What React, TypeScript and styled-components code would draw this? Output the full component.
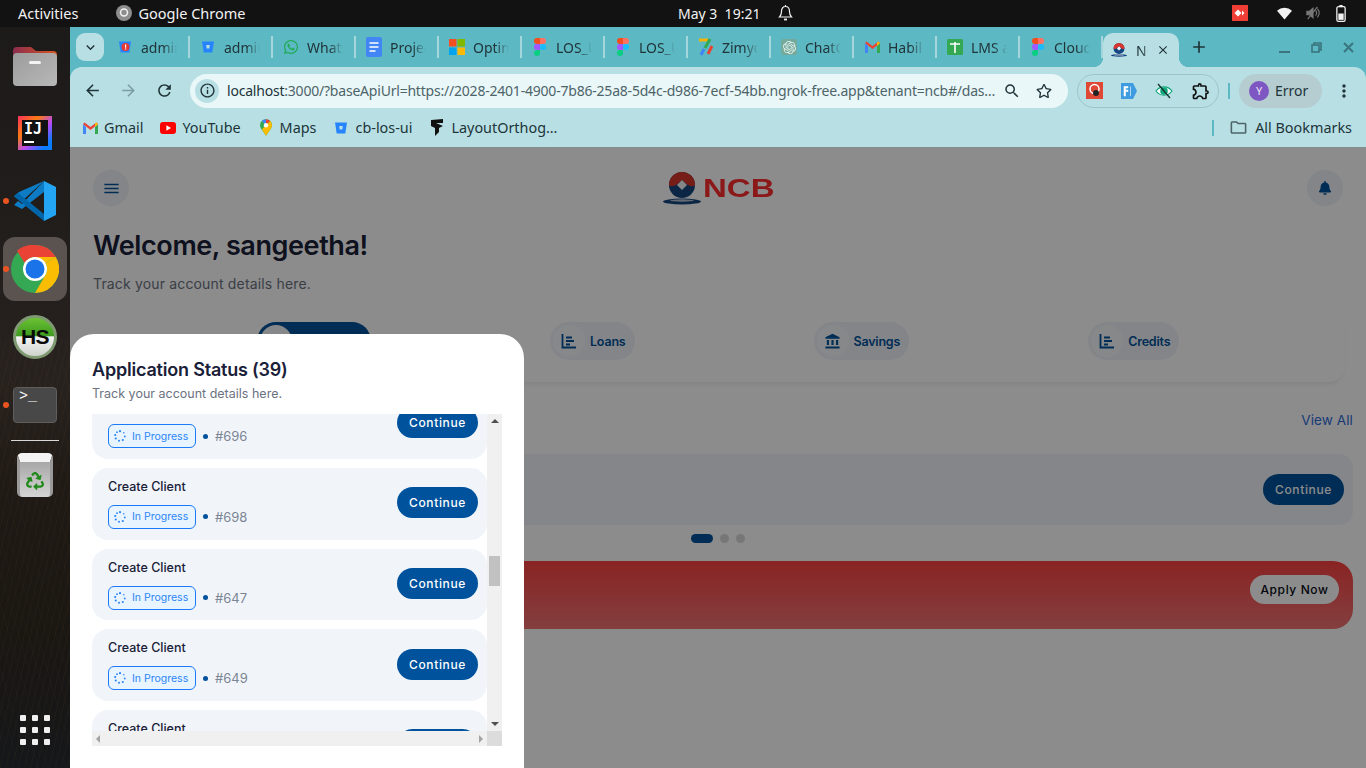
import React from "react";
import styled, { createGlobalStyle } from "styled-components";
import { FaWhatsapp, FaBell, FaRegStar, FaRecycle } from "react-icons/fa";
import { SiOpenai } from "react-icons/si";
import {
  MdArrowBack,
  MdArrowForward,
  MdRefresh,
  MdMenu,
  MdAccountBalance,
  MdOutlineFolder,
  MdMoreVert,
  MdClose,
  MdAdd,
  MdKeyboardArrowDown,
  MdOutlineInfo,
  MdSearch,
  MdOutlineExtension,
} from "react-icons/md";

const uiFont = `"Noto Sans", "Open Sans", sans-serif`;
const pageFont = `Inter, "Noto Sans", sans-serif`;

const GlobalStyle = createGlobalStyle`
  html, body {
    margin: 0;
    padding: 0;
    overflow: hidden;
    background: #111;
  }
  * {
    box-sizing: border-box;
  }
`;

const Desktop = styled.div`
  width: 1366px;
  height: 768px;
  display: flex;
  flex-direction: column;
  overflow: hidden;
  font-family: ${uiFont};
`;

/* ---------- gnome top bar ---------- */

const TopBar = styled.div`
  height: 27px;
  flex: none;
  display: flex;
  align-items: center;
  padding-bottom: 1px;
  background: #121212;
  color: #f2f2f2;
  font-size: 14.5px;
`;

const TopLeft = styled.div`
  width: 678px;
  padding-left: 18px;
  display: flex;
  align-items: center;
`;

const AppMenu = styled.div`
  margin-left: 38px;
  display: flex;
  align-items: center;
  gap: 6px;
`;

const TopCenter = styled.div`
  display: flex;
  align-items: center;
  gap: 18px;
  font-size: 14px;
`;

const TopRight = styled.div`
  margin-left: auto;
  display: flex;
  align-items: center;
  padding-right: 20px;
`;

const TrayIcon = styled.svg<{ $gap: number }>`
  display: block;
  margin-left: ${(p) => p.$gap}px;
`;

/* ---------- dock ---------- */

const Body = styled.div`
  flex: 1;
  display: flex;
  min-height: 0;
`;

const Dock = styled.div`
  width: 70px;
  flex: none;
  display: flex;
  flex-direction: column;
  align-items: center;
  padding: 4px 0 23px;
  background:
    repeating-linear-gradient(103deg, rgba(130, 90, 45, 0.07) 0 1px, transparent 1px 6px) bottom / 100% 58% no-repeat,
    repeating-linear-gradient(74deg, rgba(110, 75, 40, 0.05) 0 1px, transparent 1px 9px) bottom / 100% 58% no-repeat,
    linear-gradient(180deg, #1d1b1a 0%, #201d1b 25%, #28221f 48%, #1f1a15 62%, #1b1712 80%, #15171a 100%);
`;

const DockSlot = styled.div<{ $active?: boolean }>`
  position: relative;
  width: 64px;
  height: 68px;
  display: flex;
  align-items: center;
  justify-content: center;

  &::before {
    content: "";
    position: absolute;
    inset: 2px 0;
    border-radius: 12px;
    background: ${(p) => (p.$active ? "#5a5350" : "transparent")};
  }

  & > * {
    position: relative;
  }
`;

const RunningDot = styled.span`
  position: absolute !important;
  left: 0;
  top: 31px;
  width: 6px;
  height: 6px;
  border-radius: 50%;
  background: #e95420;
`;

const DockSeparator = styled.div`
  width: 48px;
  height: 1px;
  background: #d8d8d8;
  margin-top: 1px;
`;

const IdeTile = styled.div`
  width: 34px;
  height: 34px;
  padding: 4px;
  background: linear-gradient(135deg, #fe315d 0%, #f97a12 32%, #b74af7 58%, #087cfa 85%);
`;

const IdeInner = styled.div`
  width: 100%;
  height: 100%;
  background: #111;
  color: #fff;
  display: flex;
  flex-direction: column;
  padding: 2px 0 0 2px;
  font-family: "DejaVu Sans Mono", monospace;
  font-weight: 700;
  font-size: 15px;
  line-height: 14px;

  &::after {
    content: "";
    width: 10px;
    height: 2px;
    margin-top: 5px;
    background: #fff;
  }
`;

const HsBall = styled.div`
  width: 44px;
  height: 44px;
  border-radius: 50%;
  border: 3px solid #7f9a72;
  background: linear-gradient(180deg, #6cc234 0%, #3d9a1e 48%, #f4f4f4 49%, #cfd4cc 100%);
  display: flex;
  align-items: center;
  justify-content: center;
  color: #0a0a0a;
  font-family: "Liberation Sans", sans-serif;
  font-weight: 700;
  font-size: 21px;
  letter-spacing: -0.5px;
`;

const TerminalTile = styled.div`
  width: 44px;
  height: 36px;
  border-radius: 4px;
  border: 1px solid #5e5e5e;
  background: #484848;
  color: #fff;
  font-family: "Liberation Mono", monospace;
  font-size: 15px;
  line-height: 14px;
  padding: 2px 0 0 5px;
`;

const TrashTile = styled.div`
  width: 36px;
  height: 44px;
  padding-top: 10px;
  border-radius: 5px;
  border-top: 9px solid #f4f4f4;
  border-left: 3px solid #9a9a9a;
  border-right: 3px solid #9a9a9a;
  background: linear-gradient(180deg, #a8a8a8 0%, #d4d4d4 100%);
  color: #1f8a1a;
  display: flex;
  justify-content: center;
  font-size: 18px;
  line-height: 0;
`;

const AppGrid = styled.div`
  margin-top: auto;
  display: grid;
  grid-template-columns: repeat(3, 6px);
  gap: 6px;
`;

const AppGridDot = styled.span`
  width: 6px;
  height: 6px;
  border-radius: 1px;
  background: #f0f0f0;
`;

/* ---------- browser chrome ---------- */

const Browser = styled.div`
  flex: 1;
  min-width: 0;
  display: flex;
  flex-direction: column;
  background: #5cb8c2;
`;

const TabStrip = styled.div`
  height: 40px;
  flex: none;
  display: flex;
  align-items: center;
  padding-left: 6px;
  color: #20343a;
  font-size: 14px;
`;

const TabSearch = styled.div`
  width: 28px;
  height: 28px;
  margin-right: 3px;
  border-radius: 9px;
  background: #b8e0e4;
  display: flex;
  align-items: center;
  justify-content: center;
  font-size: 17px;
`;

const Tab = styled.div`
  width: 83px;
  height: 22px;
  display: flex;
  align-items: center;
  padding-left: 10px;
  border-right: 2px solid #a5d6db;
`;

const FavSlot = styled.span`
  width: 16px;
  flex: none;
  display: flex;
  align-items: center;
  justify-content: center;
`;

const TabTitle = styled.span`
  width: 36px;
  margin-left: 8px;
  overflow: hidden;
  white-space: nowrap;
  font-size: 14px;
  -webkit-mask-image: linear-gradient(90deg, #000 62%, transparent 100%);
  mask-image: linear-gradient(90deg, #000 62%, transparent 100%);
`;

const ActiveTab = styled.div`
  position: relative;
  width: 76px;
  height: 34px;
  margin-top: 6px;
  padding: 0 9px 0 8px;
  display: flex;
  align-items: center;
  background: #b8e0e4;
  border-radius: 10px 10px 0 0;

  &::before,
  &::after {
    content: "";
    position: absolute;
    bottom: 0;
    width: 10px;
    height: 10px;
    background: radial-gradient(circle at 0 0, transparent 10px, #b8e0e4 10.5px);
  }
  &::before {
    left: -10px;
  }
  &::after {
    right: -10px;
    background: radial-gradient(circle at 100% 0, transparent 10px, #b8e0e4 10.5px);
  }
`;

const ActiveTitle = styled(TabTitle)`
  width: 12px;
  margin-left: 9px;
  flex: none;
`;

const TabClose = styled(MdClose)`
  margin-left: auto;
  font-size: 14px;
  color: #20343a;
`;

const NewTab = styled(MdAdd)`
  margin-left: 10px;
  font-size: 20px;
`;

const WindowControls = styled.div`
  margin-left: auto;
  padding-right: 12px;
  display: flex;
  align-items: center;
  gap: 21px;
  color: #3a757f;
`;

const Toolbar = styled.div`
  height: 44px;
  flex: none;
  display: flex;
  align-items: center;
  padding: 3px 0 0 12px;
  background: #b8e0e4;
  border-radius: 12px 12px 0 0;
  color: #20343a;
`;

const NavButton = styled.div<{ $dim?: boolean }>`
  width: 20px;
  height: 20px;
  margin-right: 16px;
  display: flex;
  align-items: center;
  justify-content: center;
  font-size: 19px;
  color: ${(p) => (p.$dim ? "#7c9da3" : "#20343a")};
`;

const Omnibox = styled.div`
  width: 878px;
  height: 34px;
  padding: 0 14px 0 5px;
  border-radius: 17px;
  background: #eaf7f8;
  display: flex;
  align-items: center;
  font-size: 14px;
  color: #4d6469;
`;

const InfoChip = styled.div`
  width: 24px;
  height: 24px;
  flex: none;
  margin-right: 8px;
  border-radius: 50%;
  background: #b8e0e4;
  color: #20343a;
  display: flex;
  align-items: center;
  justify-content: center;
  font-size: 17px;
`;

const UrlText = styled.div`
  flex: 1;
  min-width: 0;
  overflow: hidden;
  white-space: nowrap;
  letter-spacing: -0.21px;
  b {
    font-weight: 400;
    color: #20343a;
  }
`;

const OmniAction = styled.div<{ $gap: number; $size: number }>`
  margin-left: ${(p) => p.$gap}px;
  width: 20px;
  display: flex;
  justify-content: center;
  font-size: ${(p) => p.$size}px;
  color: #20343a;
`;

const ExtensionGroup = styled.div`
  width: 142px;
  height: 34px;
  margin-left: 9px;
  padding: 0 7px 0 8px;
  border: 1px solid #9cc5ca;
  border-radius: 17px;
  display: flex;
  align-items: center;
  justify-content: space-between;
  color: #111;
`;

const ToolDivider = styled.div`
  width: 2px;
  height: 16px;
  margin-left: 9px;
  background: #5cb8c2;
`;

const ProfileChip = styled.div`
  width: 83px;
  height: 34px;
  margin-left: 9px;
  padding-left: 10px;
  border-radius: 17px;
  background: #b5cdd1;
  display: flex;
  align-items: center;
  gap: 6px;
  font-size: 14px;
  color: #20343a;
`;

const Avatar = styled.div`
  width: 20px;
  height: 20px;
  border-radius: 50%;
  background: #7e57c2;
  color: #e9e2f7;
  font-size: 11px;
  display: flex;
  align-items: center;
  justify-content: center;
`;

const MoreButton = styled(MdMoreVert)`
  margin-left: 12px;
  font-size: 20px;
`;

const BookmarksBar = styled.div`
  height: 37px;
  flex: none;
  display: flex;
  align-items: center;
  background: #b8e0e4;
  border-bottom: 1px solid #858d8e;
  padding: 0 14px 3px 12px;
  color: #20343a;
  font-size: 14.4px;
`;

const Bookmark = styled.div`
  display: flex;
  align-items: center;
  gap: 6px;
  margin-right: 17px;
  white-space: nowrap;
`;

const BookmarksEnd = styled.div`
  margin-left: auto;
  display: flex;
  align-items: center;
  gap: 7px;
`;

const BarDivider = styled.div`
  width: 2px;
  height: 16px;
  margin-right: 8px;
  background: #5cb8c2;
`;

/* ---------- page under the sheet ---------- */

const Viewport = styled.div`
  position: relative;
  flex: 1;
  min-height: 0;
  overflow: hidden;
  background: #fff;
  font-family: ${pageFont};
`;

const Page = styled.div`
  padding: 22px 13px 0 23px;
`;

const PageHeader = styled.div`
  margin-right: 10px;
  display: flex;
  align-items: center;
  justify-content: space-between;
`;

const CircleButton = styled.div`
  width: 36px;
  height: 36px;
  border-radius: 50%;
  background: #f0f3f7;
  color: #00529c;
  display: flex;
  align-items: center;
  justify-content: center;
  font-size: 19px;
`;

const Logo = styled.div`
  width: 110px;
  display: flex;
  align-items: center;
  gap: 2px;
`;

const LogoText = styled.span`
  font-family: "Liberation Sans", sans-serif;
  font-weight: 700;
  font-size: 25px;
  line-height: 26px;
  color: #fd2e2e;
  transform: scaleX(1.32);
  transform-origin: left;
`;

const Heading = styled.h1`
  margin: 23px 0 0;
  font-size: 27px;
  line-height: 34px;
  font-weight: 600;
  letter-spacing: -0.4px;
  color: #1a2038;
`;

const Subheading = styled.p`
  margin: 11px 0 0;
  font-size: 14px;
  line-height: 20px;
  letter-spacing: 0.16px;
  color: #6b7280;
`;

const TabsCard = styled.div`
  margin: 12px 8px 0 -15px;
  padding: 16px 0 22px 179px;
  display: flex;
  gap: 179px;
  border-radius: 16px;
  box-shadow: 0 4px 4px -2px rgba(0, 0, 0, 0.08);
`;

const Pill = styled.div<{ $active?: boolean }>`
  height: 38px;
  min-width: ${(p) => (p.$active ? "114px" : "0")};
  padding: 3px 9px 3px 3px;
  border-radius: 19px;
  background: ${(p) => (p.$active ? "#00529c" : "#f0f3f7")};
  display: flex;
  align-items: center;
  gap: 5px;
  font-size: 12.5px;
  font-weight: 600;
  letter-spacing: -0.2px;
  color: #00529c;
`;

const PillIcon = styled.div`
  width: 32px;
  height: 32px;
  border-radius: 50%;
  background: #f6f8fb;
  display: flex;
  align-items: center;
  justify-content: center;
  font-size: 17px;
`;

const SectionHeader = styled.div`
  margin-top: 28px;
  display: flex;
  justify-content: flex-end;
  font-size: 13.5px;
  line-height: 20px;
  letter-spacing: 0.1px;
  color: #2d6bd8;
`;

const AppCard = styled.div`
  height: 71px;
  margin-top: 24px;
  padding-right: 9px;
  border-radius: 14px;
  background: #f1f5fa;
  display: flex;
  align-items: center;
  justify-content: flex-end;
`;

const ContinueButton = styled.div`
  width: 81px;
  height: 31px;
  flex: none;
  border-radius: 16px;
  background: #00529c;
  color: #fff;
  display: flex;
  align-items: center;
  justify-content: center;
  font-size: 12px;
  font-weight: 550;
  letter-spacing: 0.65px;
`;

const RowButton = styled(ContinueButton)`
  margin-bottom: 2px;
`;

const Pager = styled.div`
  margin: 9px 0 0 598px;
  display: flex;
  gap: 7px;
`;

const PagerDot = styled.span<{ $on?: boolean }>`
  width: ${(p) => (p.$on ? 22 : 9)}px;
  height: 9px;
  border-radius: 5px;
  background: ${(p) => (p.$on ? "#00529c" : "#d9d9d9")};
`;

const Banner = styled.div`
  height: 68px;
  margin-top: 18px;
  padding: 14px 14px 0 0;
  border-radius: 20px;
  background: linear-gradient(180deg, #fb4141 0%, #f07373 100%);
  display: flex;
  justify-content: flex-end;
`;

const ApplyButton = styled.div`
  width: 89px;
  height: 29px;
  border-radius: 15px;
  background: #fff;
  color: #050a14;
  display: flex;
  align-items: center;
  justify-content: center;
  font-size: 12px;
  font-weight: 500;
  letter-spacing: 0.6px;
`;

const Scrim = styled.div`
  position: absolute;
  inset: 0;
  background: rgba(0, 0, 0, 0.45);
`;

/* ---------- bottom sheet ---------- */

const Sheet = styled.div`
  position: absolute;
  left: 0;
  bottom: 0;
  width: 454px;
  height: 434px;
  padding: 25px 22px 22px;
  display: flex;
  flex-direction: column;
  background: #fff;
  border-radius: 24px 24px 0 0;
`;

const SheetTitle = styled.div`
  font-size: 18px;
  line-height: 22px;
  font-weight: 600;
  letter-spacing: -0.2px;
  color: #1a2038;
`;

const SheetSub = styled.div`
  margin-top: 5px;
  font-size: 12.5px;
  line-height: 16px;
  color: #6b7280;
`;

const ListFrame = styled.div`
  margin-top: 12px;
  flex: 1;
  min-height: 0;
  display: grid;
  grid-template-columns: 395px 15px;
  grid-template-rows: 1fr 15px;
`;

const ListClip = styled.div`
  overflow: hidden;
  min-height: 0;
`;

const List = styled.div`
  margin-top: -26.6px;
  display: flex;
  flex-direction: column;
  gap: 9px;
`;

const Row = styled.div`
  height: 71.67px;
  flex: none;
  padding: 0 9px 0 16px;
  border-radius: 16px;
  background: #f1f5fa;
  display: flex;
  align-items: center;
  justify-content: space-between;
`;

const RowText = styled.div`
  display: flex;
  flex-direction: column;
  gap: 10px;
`;

const RowTitle = styled.div`
  font-size: 12.5px;
  line-height: 16px;
  font-weight: 500;
  color: #1a2038;
`;

const RowMeta = styled.div`
  display: flex;
  align-items: center;
  gap: 7px;
  font-size: 13px;
  color: #7b8594;
`;

const StatusBadge = styled.div`
  width: 88px;
  height: 24px;
  border: 1px solid #1a7af8;
  border-radius: 6px;
  background: #e8f4ff;
  color: #2d86f6;
  font-size: 10.5px;
  display: flex;
  align-items: center;
  gap: 6px;
  padding-left: 5px;
  white-space: nowrap;
`;

const MetaBullet = styled.span`
  width: 5px;
  height: 5px;
  border-radius: 50%;
  background: #00529c;
`;

const ScrollTrack = styled.div`
  background: #f0f0f0;
  display: flex;
  flex-direction: column;
  align-items: center;
  justify-content: space-between;
  padding: 5px 0;
  min-height: 0;
`;

const ScrollThumb = styled.div`
  width: 11px;
  height: 30px;
  margin-top: 133px;
  margin-bottom: auto;
  background: #c1c1c1;
`;

const ScrollArrow = styled.span<{ $dir: "up" | "down" | "left" | "right" }>`
  width: 0;
  height: 0;
  flex: none;
  border-style: solid;
  border-color: transparent;
  ${(p) =>
    p.$dir === "up"
      ? "border-width: 0 4px 4px; border-bottom-color: #505050;"
      : p.$dir === "down"
        ? "border-width: 4px 4px 0; border-top-color: #505050;"
        : p.$dir === "left"
          ? "border-width: 4px 4px 4px 0; border-right-color: #a3a3a3;"
          : "border-width: 4px 0 4px 4px; border-left-color: #a3a3a3;"}
`;

const ScrollTrackH = styled.div`
  background: #f0f0f0;
  display: flex;
  align-items: center;
  justify-content: space-between;
  padding: 0 4px;
`;

const ScrollCorner = styled.div`
  background: #dcdcdc;
`;

const ChatGptTile = styled.span`
  width: 16px;
  height: 16px;
  border-radius: 2px;
  background: #74aa9c;
  color: #e8f3f0;
  font-size: 13px;
  display: flex;
  align-items: center;
  justify-content: center;
`;

/* ---------- drawings ---------- */

const BitbucketIcon = ({ alert = false }: { alert?: boolean }) => (
  <svg width="14" height="14" viewBox="0 0 14 14">
    <path d="M1 1.5h12l-1.700 11H2.700z" fill="#2684ff" />
    {alert ? (
      <>
        <circle cx="7.500" cy="7" r="4" fill="#e53935" />
        <rect x="7" y="4.500" width="1.200" height="3.200" fill="#fff" />
        <rect x="7" y="8.400" width="1.200" height="1.200" fill="#fff" />
      </>
    ) : (
      <path d="M5.200 5h3.600l-.5 3.400H5.700z" fill="#b8e0e4" />
    )}
  </svg>
);

const FigmaIcon = () => (
  <svg width="12" height="18" viewBox="0 0 12 18">
    <path d="M6 0H3a3 3 0 0 0 0 6h3z" fill="#f24e1e" />
    <path d="M6 0h3a3 3 0 0 1 0 6H6z" fill="#ff7262" />
    <path d="M6 6H3a3 3 0 0 0 0 6h3z" fill="#a259ff" />
    <circle cx="9" cy="9" r="3" fill="#1abcfe" />
    <path d="M3 12h3v3a3 3 0 1 1-3-3z" fill="#0acf83" />
  </svg>
);

const DocsIcon = () => (
  <svg width="16" height="20" viewBox="0 0 16 20">
    <rect width="16" height="20" rx="2" fill="#4285f4" />
    <path d="M3.500 6h9M3.500 10h9M3.500 14h6" stroke="#fff" strokeWidth="1.600" />
  </svg>
);

const MicrosoftIcon = () => (
  <svg width="16" height="16" viewBox="0 0 16 16">
    <rect width="7.500" height="7.500" fill="#f25022" />
    <rect x="8.500" width="7.500" height="7.500" fill="#7fba00" />
    <rect y="8.500" width="7.500" height="7.500" fill="#00a4ef" />
    <rect x="8.500" y="8.500" width="7.500" height="7.500" fill="#ffb900" />
  </svg>
);

const ZimyoIcon = () => (
  <svg width="16" height="18" viewBox="0 0 16 18">
    <path d="M1 2h9" stroke="#f4b400" strokeWidth="3" />
    <path d="M12 1 7 10" stroke="#34a853" strokeWidth="3" />
    <path d="M6 11 3 17" stroke="#4285f4" strokeWidth="3" />
    <path d="M14 8l-4 8" stroke="#ea4335" strokeWidth="3" />
  </svg>
);

const GmailIcon = () => (
  <svg width="15" height="12" viewBox="0 0 15 12">
    <path d="M0 2v10h3V5z" fill="#4285f4" />
    <path d="M15 2v10h-3V5z" fill="#34a853" />
    <path d="M0 2 1.600.4 7.500 5 13.400.4 15 2 7.500 8z" fill="#ea4335" />
    <path d="M12 5 15 2 13.400.4 12 1.500z" fill="#fbbc04" />
  </svg>
);

const ChatGptIcon = () => (
  <ChatGptTile>
    <SiOpenai />
  </ChatGptTile>
);

const LmsIcon = () => (
  <svg width="16" height="16" viewBox="0 0 16 16">
    <rect width="16" height="16" rx="1.500" fill="#34a853" />
    <path d="M3 5h10M8 3v11" stroke="#fff" strokeWidth="1.600" />
  </svg>
);

const NcbMark = ({ width, id }: { width: number; id: string }) => (
  <svg width={width} height={(width * 33) / 38} viewBox="0 0 38 33">
    <defs>
      <clipPath id={id}>
        <circle cx="19" cy="13" r="13" />
      </clipPath>
    </defs>
    <g clipPath={`url(#${id})`}>
      <rect width="38" height="27" fill="#16467f" />
      <path d="M4 0h30v12c-5 5-10 1-15-4-5 5-10 9-15 4z" fill="#d9352c" />
    </g>
    <path d="M19 8l5 5-5 5-5-5z" fill="#f3f5f8" />
    <ellipse cx="19" cy="29.500" rx="19" ry="3" fill="#16467f" />
    <ellipse cx="19" cy="28.500" rx="12" ry="1.200" fill="#b9c4d4" />
  </svg>
);

const BookmarkLayoutIcon = () => (
  <svg width="12" height="17" viewBox="0 0 12 17">
    <path d="M0 1l12-1v4H5l7 3-4 2v4L4 17V9L0 7z" fill="#111" />
  </svg>
);

const MapsIcon = () => (
  <svg width="12" height="17" viewBox="0 0 13 18">
    <path d="M6.500 0A6.500 6.500 0 0 0 .9 9.700L6.500 18l5.600-8.300A6.500 6.500 0 0 0 6.500 0z" fill="#34a853" />
    <path d="M6.500 0A6.500 6.500 0 0 0 1.900 1.900L6.500 6.500z" fill="#4285f4" />
    <path d="M6.500 0a6.500 6.500 0 0 1 4.600 1.900L6.500 6.500z" fill="#ea4335" />
    <path d="M13 6.500a6.500 6.500 0 0 0-1.900-4.600L6.500 6.500 2 11l4.500 7 5.600-8.300A6.500 6.500 0 0 0 13 6.500z" fill="#fbbc04" />
    <circle cx="6.500" cy="6.500" r="2.400" fill="#fff" />
  </svg>
);

const YouTubeIcon = () => (
  <svg width="16" height="12" viewBox="0 0 16 12">
    <rect width="16" height="12" rx="3" fill="#f00" />
    <path d="M6.400 3.300 11 6l-4.600 2.700z" fill="#fff" />
  </svg>
);

const FolderIcon = () => (
  <svg width="44" height="41" viewBox="0 0 44 41">
    <defs>
      <linearGradient id="folderTab" x1="0" x2="1" y1="0" y2="0">
        <stop offset="0" stopColor="#8d2c4e" />
        <stop offset="1" stopColor="#d9561f" />
      </linearGradient>
      <linearGradient id="folderBody" x1="0" x2="1" y1="0" y2="1">
        <stop offset="0" stopColor="#9c9c9c" />
        <stop offset="1" stopColor="#b8b8b8" />
      </linearGradient>
    </defs>
    <path d="M0 6a4 4 0 0 1 4-4h14l5 4h17a4 4 0 0 1 4 4v10H0z" fill="url(#folderTab)" />
    <rect y="8" width="44" height="33" rx="4" fill="url(#folderBody)" />
    <rect x="16" y="16" width="12" height="3" rx="1.500" fill="#f4f4f4" />
  </svg>
);

const VsCodeIcon = () => (
  <svg width="42" height="42" viewBox="0 0 42 42">
    <path d="M30 1 42 7v28l-12 6z" fill="#24a5f3" />
    <path d="M30 1v11L8 29 0 25l4-4 4 3z" fill="#0e7cc4" />
    <path d="M30 1 8 21l-4-3-4-2 5-4z" fill="#0e7cc4" />
    <path d="M0 16.500 4 13l26 21v7z" fill="#0065a9" />
  </svg>
);

const ChromeIcon = () => (
  <svg width="48" height="48" viewBox="0 0 48 48">
    <circle cx="24" cy="24" r="24" fill="#34a853" />
    <path d="M24 0a24 24 0 0 1 20.800 12H24a12 12 0 0 0-10.400 6L6 5.800A24 24 0 0 1 24 0z" fill="#ea4335" />
    <path d="M44.800 12A24 24 0 0 1 24 48l10.400-18A12 12 0 0 0 34.400 18z" fill="#fbbc04" />
    <path d="M44.800 12H24l10.400 6 10.400-6z" fill="#fbbc04" />
    <circle cx="24" cy="24" r="12" fill="#fff" />
    <circle cx="24" cy="24" r="9.500" fill="#1a73e8" />
  </svg>
);

const Spinner = () => (
  <svg width="12" height="12" viewBox="0 0 12 12" fill="#2d86f6">
    <circle cx="6" cy="1.200" r="1.100" />
    <circle cx="9.800" cy="2.800" r="0.800" />
    <circle cx="10.800" cy="6.500" r="0.900" />
    <circle cx="8.800" cy="10" r="1.100" />
    <circle cx="5" cy="10.800" r="1" />
    <circle cx="1.800" cy="8.500" r="1.100" />
    <circle cx="1.200" cy="5" r="1.100" />
    <circle cx="3" cy="2.200" r="0.900" />
  </svg>
);

const ChartIcon = () => (
  <svg width="16" height="17" viewBox="0 0 16 17" fill="none" stroke="currentColor" strokeWidth="1.800">
    <path d="M1.500 1v13.500H15" />
    <path d="M5 4.500h6M5 8h8M5 11.500h4" />
  </svg>
);

const EyeOffIcon = () => (
  <svg width="18" height="16" viewBox="0 0 18 16">
    <path d="M1 8c4-5.500 12-5.500 16 0-4 5.500-12 5.500-16 0z" fill="#fff" stroke="#12a67c" strokeWidth="1.200" />
    <circle cx="9" cy="8" r="3.800" fill="#12a67c" />
    <path d="M3 1l12 14" stroke="#16322e" strokeWidth="1.300" />
  </svg>
);

/* ---------- data ---------- */

const tabs: { title: string; icon: React.ReactNode }[] = [
  { title: "admin", icon: <BitbucketIcon alert /> },
  { title: "admin", icon: <BitbucketIcon /> },
  { title: "WhatsApp", icon: <FaWhatsapp size={16} color="#1faa53" /> },
  { title: "Project", icon: <DocsIcon /> },
  { title: "Optimize", icon: <MicrosoftIcon /> },
  { title: "LOS_UI", icon: <FigmaIcon /> },
  { title: "LOS_UI", icon: <FigmaIcon /> },
  { title: "Zimyo", icon: <ZimyoIcon /> },
  { title: "ChatGPT", icon: <ChatGptIcon /> },
  { title: "Habil", icon: <GmailIcon /> },
  { title: "LMS a", icon: <LmsIcon /> },
  { title: "Cloud", icon: <FigmaIcon /> },
];

const applications = ["#696", "#698", "#647", "#649", "#651"];

export default function App() {
  return (
    <Desktop>
      <GlobalStyle />
      <TopBar>
        <TopLeft>
          Activities
          <AppMenu>
            <svg width="16" height="16" viewBox="0 0 16 16">
              <circle cx="8" cy="8" r="8" fill="#8d8d8d" />
              <circle cx="8" cy="7.500" r="3.500" fill="none" stroke="#f2f2f2" strokeWidth="1.500" />
            </svg>
            Google Chrome
          </AppMenu>
        </TopLeft>
        <TopCenter>
          <span>May 3 &nbsp;19:21</span>
          <svg width="15" height="18" viewBox="0 0 15 18" fill="none" stroke="#f2f2f2" strokeWidth="1.200">
            <path d="M7.500 1v1.500M7.500 2.500c-3 0-4 2.500-4 5 0 3-1 4.500-2 5.500h12c-1-1-2-2.500-2-5.500 0-2.500-1-5-4-5z" />
            <path d="M6 15.500h3" strokeWidth="1.800" />
          </svg>
        </TopCenter>
        <TopRight>
          <TrayIcon $gap={0} width="16" height="16" viewBox="0 0 16 16">
            <rect width="16" height="16" fill="#ef3e36" />
            <path d="M6 4.500 2.500 8 6 11.500 9.500 8zM10 5.500 12.500 8 10 10.500z" fill="#fff" />
          </TrayIcon>
          <TrayIcon $gap={29} width="15" height="13" viewBox="0 0 16 13">
            <path d="M0 3.500a12 12 0 0 1 16 0L8 13z" fill="#f2f2f2" />
          </TrayIcon>
          <TrayIcon $gap={14} width="14" height="16" viewBox="0 0 16 16" fill="none" stroke="#777" strokeWidth="1.300">
            <path d="M1 6v4h3l4 3.500v-11L4 6z" fill="#777" />
            <path d="M11 5c1.500 2 1.500 4 0 6M13 3c2.500 3 2.500 7 0 10M2 15 13 1" />
          </TrayIcon>
          <TrayIcon $gap={16} width="10" height="17" viewBox="0 0 9 16">
            <rect x="3" width="3" height="2" fill="#f2f2f2" />
            <rect x="0.600" y="1.600" width="7.800" height="13.800" rx="1.500" fill="none" stroke="#f2f2f2" strokeWidth="1.200" />
            <rect x="2" y="8" width="5" height="6" fill="#f2f2f2" />
          </TrayIcon>
        </TopRight>
      </TopBar>

      <Body>
        <Dock>
          <DockSlot>
            <FolderIcon />
          </DockSlot>
          <DockSlot>
            <IdeTile>
              <IdeInner>IJ</IdeInner>
            </IdeTile>
          </DockSlot>
          <DockSlot>
            <RunningDot />
            <VsCodeIcon />
          </DockSlot>
          <DockSlot $active>
            <RunningDot />
            <ChromeIcon />
          </DockSlot>
          <DockSlot>
            <HsBall>HS</HsBall>
          </DockSlot>
          <DockSlot>
            <RunningDot />
            <TerminalTile>&gt;_</TerminalTile>
          </DockSlot>
          <DockSeparator />
          <DockSlot>
            <TrashTile>
              <FaRecycle />
            </TrashTile>
          </DockSlot>
          <AppGrid>
            {Array.from({ length: 9 }).map((_, i) => (
              <AppGridDot key={i} />
            ))}
          </AppGrid>
        </Dock>

        <Browser>
          <TabStrip>
            <TabSearch>
              <MdKeyboardArrowDown />
            </TabSearch>
            {tabs.map((tab, i) => (
              <Tab key={i}>
                <FavSlot>{tab.icon}</FavSlot>
                <TabTitle>{tab.title}</TabTitle>
              </Tab>
            ))}
            <ActiveTab>
              <FavSlot>
                <NcbMark width={16} id="ncbFav" />
              </FavSlot>
              <ActiveTitle>NCB</ActiveTitle>
              <TabClose />
            </ActiveTab>
            <NewTab />
            <WindowControls>
              <svg width="11" height="16" viewBox="0 0 11 16">
                <rect y="12" width="11" height="2" fill="currentColor" />
              </svg>
              <svg width="11" height="11" viewBox="0 0 11 11" fill="none" stroke="currentColor" strokeWidth="1.600">
                <path d="M3 3V1h7v7H8" />
                <rect x="1" y="3" width="7" height="7" />
              </svg>
              <svg width="11" height="11" viewBox="0 0 11 11" stroke="currentColor" strokeWidth="2">
                <path d="M1 1l9 9M10 1l-9 9" />
              </svg>
            </WindowControls>
          </TabStrip>

          <Toolbar>
            <NavButton>
              <MdArrowBack />
            </NavButton>
            <NavButton $dim>
              <MdArrowForward />
            </NavButton>
            <NavButton>
              <MdRefresh />
            </NavButton>
            <Omnibox>
              <InfoChip>
                <MdOutlineInfo />
              </InfoChip>
              <UrlText>
                <b>localhost</b>:3000/?baseApiUrl=https://2028-2401-4900-7b86-25a8-5d4c-d986-7ecf-54bb.ngrok-free.app&amp;tenant=ncb#/das…
              </UrlText>
              <OmniAction $gap={4} $size={18}>
                <MdSearch />
              </OmniAction>
              <OmniAction $gap={12} $size={16}>
                <FaRegStar />
              </OmniAction>
            </Omnibox>
            <ExtensionGroup>
              <svg width="17" height="17" viewBox="0 0 17 17">
                <rect width="17" height="17" fill="#e04836" />
                <circle cx="8.500" cy="7" r="4.500" fill="none" stroke="#fff" strokeWidth="1.500" />
                <circle cx="10" cy="11" r="3" fill="#222" />
              </svg>
              <svg width="16" height="16" viewBox="0 0 16 16">
                <path d="M0 0h12l4 8-4 8H0z" fill="#3f9ce0" />
                <path d="M3 3.500h4v1.400H4.500v2.200H7v1.400H4.500V13H3zM9.500 3.500v9.500" stroke="#fff" strokeWidth="0.600" fill="#fff" />
              </svg>
              <EyeOffIcon />
              <MdOutlineExtension size={20} />
            </ExtensionGroup>
            <ToolDivider />
            <ProfileChip>
              <Avatar>Y</Avatar>
              Error
            </ProfileChip>
            <MoreButton />
          </Toolbar>

          <BookmarksBar>
            <Bookmark>
              <FavSlot>
                <GmailIcon />
              </FavSlot>
              Gmail
            </Bookmark>
            <Bookmark>
              <FavSlot>
                <YouTubeIcon />
              </FavSlot>
              YouTube
            </Bookmark>
            <Bookmark>
              <FavSlot>
                <MapsIcon />
              </FavSlot>
              Maps
            </Bookmark>
            <Bookmark>
              <FavSlot>
                <BitbucketIcon />
              </FavSlot>
              cb-los-ui
            </Bookmark>
            <Bookmark>
              <FavSlot>
                <BookmarkLayoutIcon />
              </FavSlot>
              LayoutOrthog…
            </Bookmark>
            <BookmarksEnd>
              <BarDivider />
              <MdOutlineFolder size={19} color="#4d6469" />
              All Bookmarks
            </BookmarksEnd>
          </BookmarksBar>

          <Viewport>
            <Page>
              <PageHeader>
                <CircleButton>
                  <MdMenu />
                </CircleButton>
                <Logo>
                  <NcbMark width={38} id="ncbLogo" />
                  <LogoText>NCB</LogoText>
                </Logo>
                <CircleButton>
                  <FaBell size={14} />
                </CircleButton>
              </PageHeader>
              <Heading>Welcome, sangeetha!</Heading>
              <Subheading>Track your account details here.</Subheading>
              <TabsCard>
                <Pill $active>
                  <PillIcon />
                </Pill>
                <Pill>
                  <PillIcon>
                    <ChartIcon />
                  </PillIcon>
                  Loans
                </Pill>
                <Pill>
                  <PillIcon>
                    <MdAccountBalance />
                  </PillIcon>
                  Savings
                </Pill>
                <Pill>
                  <PillIcon>
                    <ChartIcon />
                  </PillIcon>
                  Credits
                </Pill>
              </TabsCard>
              <SectionHeader>View All</SectionHeader>
              <AppCard>
                <ContinueButton>Continue</ContinueButton>
              </AppCard>
              <Pager>
                <PagerDot $on />
                <PagerDot />
                <PagerDot />
              </Pager>
              <Banner>
                <ApplyButton>Apply Now</ApplyButton>
              </Banner>
            </Page>
            <Scrim />
            <Sheet>
              <SheetTitle>Application Status (39)</SheetTitle>
              <SheetSub>Track your account details here.</SheetSub>
              <ListFrame>
                <ListClip>
                  <List>
                    {applications.map((id) => (
                      <Row key={id}>
                        <RowText>
                          <RowTitle>Create Client</RowTitle>
                          <RowMeta>
                            <StatusBadge>
                              <Spinner />
                              In Progress
                            </StatusBadge>
                            <MetaBullet />
                            {id}
                          </RowMeta>
                        </RowText>
                        <RowButton>Continue</RowButton>
                      </Row>
                    ))}
                  </List>
                </ListClip>
                <ScrollTrack>
                  <ScrollArrow $dir="up" />
                  <ScrollThumb />
                  <ScrollArrow $dir="down" />
                </ScrollTrack>
                <ScrollTrackH>
                  <ScrollArrow $dir="left" />
                  <ScrollArrow $dir="right" />
                </ScrollTrackH>
                <ScrollCorner />
              </ListFrame>
            </Sheet>
          </Viewport>
        </Browser>
      </Body>
    </Desktop>
  );
}
